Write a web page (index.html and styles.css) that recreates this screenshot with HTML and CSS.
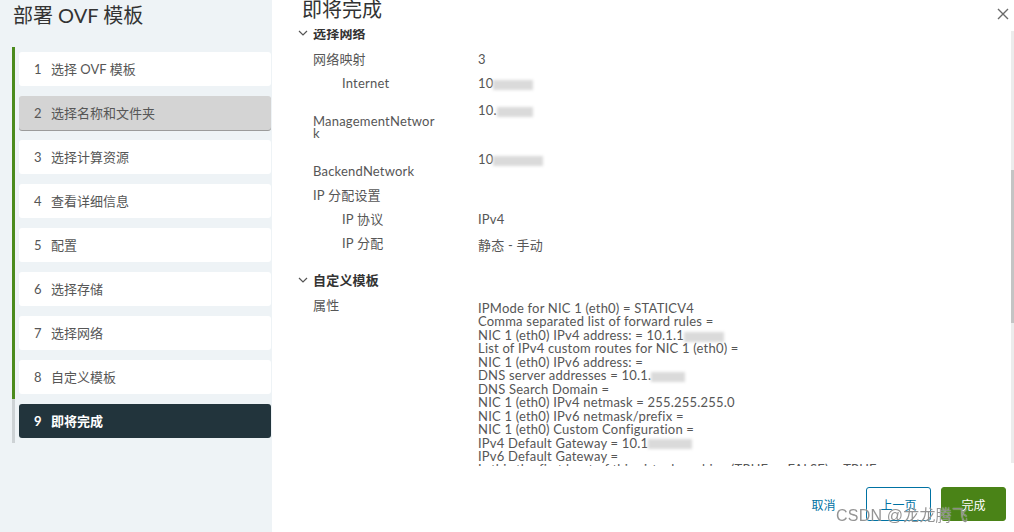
FILE: index.html
```html
<!DOCTYPE html>
<html lang="zh-CN">
<head>
  <meta charset="UTF-8" />
  <title>部署 OVF 模板</title>
  <link rel="stylesheet" href="styles.css">
</head>
<body>

<div class="wizard">
  <aside class="stepnav">
    <h2 class="wizard-title">部署 OVF 模板</h2>
    <ul class="steps">
      <li class="done"><div class="step"><span class="num">1</span>选择 OVF 模板</div></li>
      <li class="done"><div class="step hover"><span class="num">2</span>选择名称和文件夹</div></li>
      <li class="done"><div class="step"><span class="num">3</span>选择计算资源</div></li>
      <li class="done"><div class="step"><span class="num">4</span>查看详细信息</div></li>
      <li class="done"><div class="step"><span class="num">5</span>配置</div></li>
      <li class="done"><div class="step"><span class="num">6</span>选择存储</div></li>
      <li class="done"><div class="step"><span class="num">7</span>选择网络</div></li>
      <li class="done"><div class="step"><span class="num">8</span>自定义模板</div></li>
      <li class="current"><div class="step active"><span class="num">9</span>即将完成</div></li>
    </ul>
  </aside>

  <main class="page">
    <div class="page-head">
      <h3 class="page-title">即将完成</h3>
      <svg class="close" width="12" height="12" viewBox="0 0 12 12">
        <path d="M1 1 L11 11 M11 1 L1 11" stroke="#6a6a6a" stroke-width="1.4" fill="none"/>
      </svg>
    </div>

    <div class="scroll">
      <div class="content">
        <div class="section-head">
          <svg class="chev" width="10" height="6" viewBox="0 0 10 6"><polyline points="1,1 5,5 9,1" stroke="#555" stroke-width="1.2" fill="none"/></svg>
          选择网络
        </div>
        <div class="row"><div class="label">网络映射</div><div class="value">3</div></div>
        <div class="row"><div class="label sub">Internet</div><div class="value">10<span class="blur" style="width:40px"></span></div></div>
        <div class="row tall"><div class="label wrap">ManagementNetwork</div><div class="value">10.<span class="blur" style="width:36px"></span></div></div>
        <div class="row tall2"><div class="label">BackendNetwork</div><div class="value">10<span class="blur" style="width:50px"></span></div></div>
        <div class="row"><div class="label">IP 分配设置</div><div class="value"></div></div>
        <div class="row"><div class="label sub">IP 协议</div><div class="value">IPv4</div></div>
        <div class="row"><div class="label sub">IP 分配</div><div class="value shift">静态 - 手动</div></div>

        <div class="section-head second">
          <svg class="chev" width="10" height="6" viewBox="0 0 10 6"><polyline points="1,1 5,5 9,1" stroke="#555" stroke-width="1.2" fill="none"/></svg>
          自定义模板
        </div>
        <div class="row props">
          <div class="label">属性</div>
          <div class="value lines">
            <div>IPMode for NIC 1 (eth0) = STATICV4</div>
            <div>Comma separated list of forward rules =</div>
            <div>NIC 1 (eth0) IPv4 address: = 10.1.1<span class="blur" style="width:40px"></span></div>
            <div>List of IPv4 custom routes for NIC 1 (eth0) =</div>
            <div>NIC 1 (eth0) IPv6 address: =</div>
            <div>DNS server addresses = 10.1.<span class="blur" style="width:34px"></span></div>
            <div>DNS Search Domain =</div>
            <div>NIC 1 (eth0) IPv4 netmask = 255.255.255.0</div>
            <div>NIC 1 (eth0) IPv6 netmask/prefix =</div>
            <div>NIC 1 (eth0) Custom Configuration =</div>
            <div>IPv4 Default Gateway = 10.1<span class="blur" style="width:44px"></span></div>
            <div>IPv6 Default Gateway =</div>
            <div>Is this the first boot of this virtual machine (TRUE or FALSE) = TRUE</div>
          </div>
        </div>
      </div>
      <div class="track"><div class="thumb"></div></div>
    </div>

    <div class="footer">
      <button class="btn flat">取消</button>
      <button class="btn outline">上一页</button>
      <button class="btn success">完成</button>
    </div>
  </main>
</div>

<div class="watermark">CSDN @龙龙腾飞</div>

</body>
</html>
```

FILE: styles.css
```css
body {
  margin: 0;
  font-family: Lato, "Noto Sans CJK SC", sans-serif;
  font-size: 13px;
  letter-spacing: 0.2px;
  color: #565656;
  background: #fff;
  overflow: hidden;
}
.wizard {
  display: flex;
  height: 532px;
}

/* left step navigation */
.stepnav {
  width: 272px;
  flex: none;
  background: #eef3f6;
}
.wizard-title {
  margin: 0;
  padding: 3px 0 0 13px;
  height: 47px;
  box-sizing: border-box;
  font-size: 20px;
  font-weight: normal;
  line-height: 24px;
  letter-spacing: 0;
  color: #333;
}
.steps {
  list-style: none;
  margin: 0 1px 0 12px;
  padding: 0;
}
.steps li {
  border-left: 3px solid #4b8b1d;
  padding: 5px 0 5px 4px;
}
.steps li.current {
  border-left-color: #cdd2d5;
}
.step {
  height: 34px;
  line-height: 34px;
  background: #fff;
  border-radius: 3px;
  padding-left: 15px;
  letter-spacing: 0;
}
.step.hover {
  background: #d4d4d4;
  box-shadow: 0 1px 0 #9b9b9b;
}
.step.active {
  background: #22343c;
  color: #fff;
  font-weight: bold;
}
.num {
  display: inline-block;
  width: 17px;
}

/* right page */
.page {
  flex: 1;
  display: flex;
  flex-direction: column;
  min-width: 0;
}
.page-head {
  height: 29px;
  display: flex;
  justify-content: space-between;
  padding: 0 5px 0 30px;
}
.page-title {
  margin: -3px 0 0;
  font-size: 20px;
  font-weight: normal;
  line-height: 24px;
  letter-spacing: 0;
  color: #333;
}
.close {
  margin-top: 8px;
}
.scroll {
  height: 437px;
  display: flex;
}
.content {
  flex: 1;
  overflow: hidden;
  padding-left: 26px;
}
.content > :first-child {
  margin-top: -8px;
}
.section-head {
  height: 24px;
  line-height: 24px;
  font-weight: bold;
  color: #333;
  display: flex;
  align-items: center;
  gap: 5px;
}
.section-head.second {
  margin-top: 11px;
}
.chev {
  flex: none;
}
.row {
  display: grid;
  grid-template-columns: 180px 1fr;
  min-height: 24px;
  line-height: 24px;
}
.row:nth-child(2) {
  margin-top: 2px;
}
.label {
  padding-left: 15px;
}
.label.sub {
  padding-left: 44px;
}
.label.wrap {
  width: 128px;
  word-break: break-all;
  line-height: 12px;
  padding-top: 20px;
}
.row.tall {
  height: 52px;
}
.row.tall .value {
  padding-top: 3px;
}
.row.tall2 {
  height: 36px;
}
.row.tall2 .label {
  padding-top: 12px;
}
.value.shift {
  padding-top: 2px;
}
.row.props {
  margin-top: 5px;
}
.row.props .label {
  line-height: 16px;
}
.lines {
  line-height: 13.45px;
  padding-top: 5px;
}
.blur {
  display: inline-block;
  height: 10px;
  background: #dadada;
  filter: blur(1.5px);
  vertical-align: middle;
}
.track {
  width: 3px;
  margin-top: 2px;
  height: 432px;
  background: #ececec;
}
.thumb {
  margin-top: 139px;
  height: 153px;
  background: #c4c4c4;
}

/* footer buttons */
.footer {
  flex: 1;
  display: flex;
  justify-content: flex-end;
  align-items: flex-start;
  gap: 10px;
  padding: 21px 8px 0 0;
}
.btn {
  width: 65px;
  height: 34px;
  border-radius: 3px;
  font-family: inherit;
  font-size: 12px;
  border: 1px solid transparent;
  background: none;
  color: #0072a3;
  cursor: pointer;
}
.btn.outline {
  border-color: #0072a3;
}
.btn.success {
  background: #4a8317;
  border-color: #4a8317;
  color: #fff;
}

.watermark {
  position: fixed;
  left: 836px;
  top: 502px;
  font-family: "Liberation Sans", "Noto Sans CJK SC", sans-serif;
  font-size: 16px;
  color: rgba(90, 90, 90, 0.65);
  text-shadow: 0 0 1px #fff;
  white-space: nowrap;
}
```
